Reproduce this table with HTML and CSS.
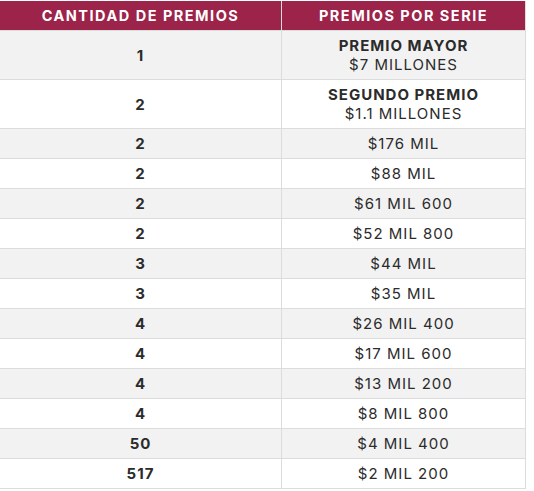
FILE: index.html
```html
<!DOCTYPE html>
<html lang="es">
<head>
    <meta charset="UTF-8">
    <meta name="viewport" content="width=device-width, initial-scale=1.0">
    <title>Premios por serie</title>
    <link rel="stylesheet" href="styles.css">
</head>
<body>
    <table class="premios">
        <thead>
            <tr>
                <th>CANTIDAD DE PREMIOS</th>
                <th>PREMIOS POR SERIE</th>
            </tr>
        </thead>
        <tbody>
            <tr class="doble">
                <td class="cantidad">1</td>
                <td><strong>PREMIO MAYOR</strong><br>$7 MILLONES</td>
            </tr>
            <tr class="doble">
                <td class="cantidad">2</td>
                <td><strong>SEGUNDO PREMIO</strong><br>$1.1 MILLONES</td>
            </tr>
            <tr><td class="cantidad">2</td><td>$176 MIL</td></tr>
            <tr><td class="cantidad">2</td><td>$88 MIL</td></tr>
            <tr><td class="cantidad">2</td><td>$61 MIL 600</td></tr>
            <tr><td class="cantidad">2</td><td>$52 MIL 800</td></tr>
            <tr><td class="cantidad">3</td><td>$44 MIL</td></tr>
            <tr><td class="cantidad">3</td><td>$35 MIL</td></tr>
            <tr><td class="cantidad">4</td><td>$26 MIL 400</td></tr>
            <tr><td class="cantidad">4</td><td>$17 MIL 600</td></tr>
            <tr><td class="cantidad">4</td><td>$13 MIL 200</td></tr>
            <tr><td class="cantidad">4</td><td>$8 MIL 800</td></tr>
            <tr><td class="cantidad">50</td><td>$4 MIL 400</td></tr>
            <tr><td class="cantidad">517</td><td>$2 MIL 200</td></tr>
        </tbody>
    </table>
</body>
</html>
```

FILE: styles.css
```css
/* página */
body {
    margin: 0;
    padding-top: 1px;
    background-color: #ffffff;
    font-family: 'Inter', 'Open Sans', sans-serif;
    color: #2b2b2b;
}

/* tabla de premios */
.premios {
    width: 526px;
    border-collapse: collapse;
    table-layout: fixed;
}

.premios th,
.premios td {
    border: 1px solid #dcdcdc;
    text-align: center;
    padding: 0;
}

.premios th:first-child,
.premios td:first-child {
    width: 281px;
    border-left: none;
}

.premios th {
    background-color: #9c2349;
    color: #ffffff;
    font-weight: 700;
    font-size: 14.5px;
    letter-spacing: 1.5px;
    height: 29px;
    border-top: none;
}

.premios td {
    height: 29px;
    font-size: 15px;
    letter-spacing: 1px;
    line-height: 19px;
}

.premios tbody tr:nth-child(odd) td {
    background-color: #f2f2f2;
}

.premios tr.doble td {
    height: 48px;
}

.premios td strong {
    font-weight: 700;
}

.cantidad {
    font-weight: 700;
}
```
